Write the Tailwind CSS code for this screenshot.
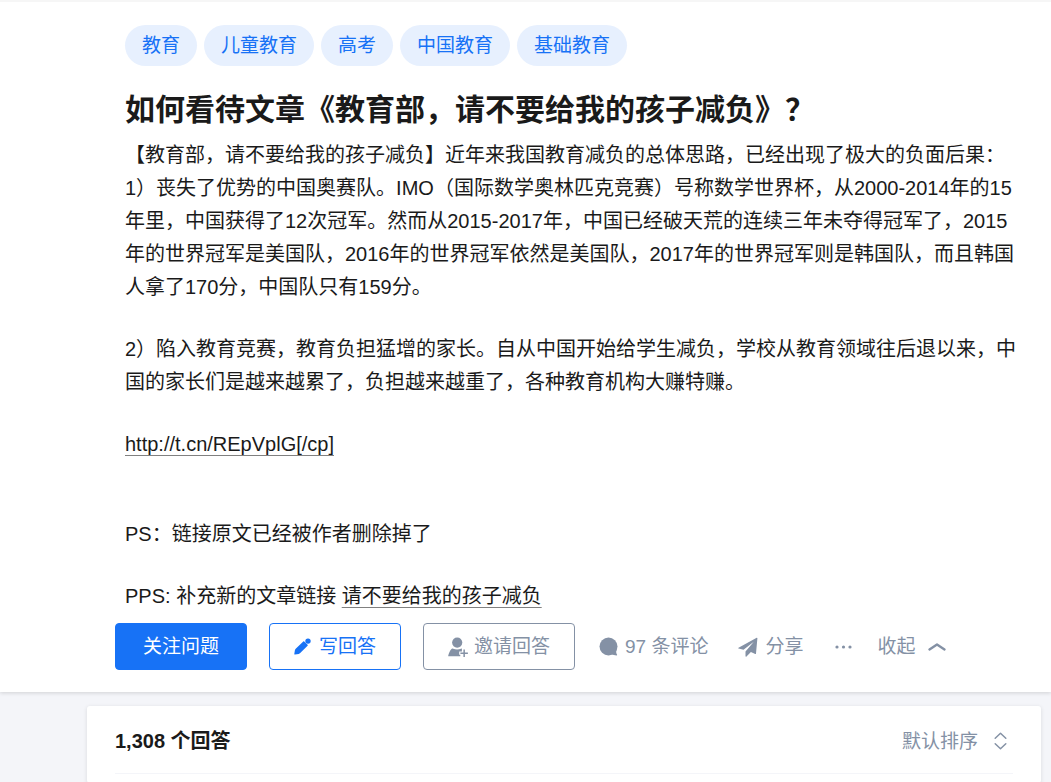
<!DOCTYPE html>
<html lang="zh-CN">
<head>
<meta charset="utf-8">
<title>如何看待文章《教育部，请不要给我的孩子减负》？</title>
<script src="https://cdn.jsdelivr.net/npm/@tailwindcss/browser@4"></script>
</head>
<body class="min-h-screen overflow-x-hidden bg-[#f4f5f9] font-['Liberation_Sans','Noto_Sans_CJK_SC',sans-serif] text-[#1a1a1a]">
<section class="border-t-2 border-[#f6f6f6] bg-white pt-[23px] pb-[22px] shadow-[0_1px_4px_rgba(26,26,26,0.16)]">
  <div class="pl-[125px]">
    <nav class="flex gap-[7px] text-[19px] leading-[41px] text-[#1772f6]" aria-label="话题">
      <a href="#" class="rounded-full bg-[#e7f0fe] px-[17px]">教育</a>
      <a href="#" class="rounded-full bg-[#e7f0fe] px-[17px]">儿童教育</a>
      <a href="#" class="rounded-full bg-[#e7f0fe] px-[17px]">高考</a>
      <a href="#" class="rounded-full bg-[#e7f0fe] px-[17px]">中国教育</a>
      <a href="#" class="rounded-full bg-[#e7f0fe] px-[17px]">基础教育</a>
    </nav>
    <h1 class="mt-[22px] text-[30px] leading-[44px] font-bold">如何看待文章《教育部，请不要给我的孩子减负》？</h1>
    <div class="mt-[7px] text-[20px] leading-[33px]">
      <p>【教育部，请不要给我的孩子减负】近年来我国教育减负的总体思路，已经出现了极大的负面后果：<br>1）丧失了优势的中国奥赛队。IMO（国际数学奥林匹克竞赛）号称数学世界杯，从2000-2014年的15<br>年里，中国获得了12次冠军。然而从2015-2017年，中国已经破天荒的连续三年未夺得冠军了，2015<br>年的世界冠军是美国队，2016年的世界冠军依然是美国队，2017年的世界冠军则是韩国队，而且韩国<br>人拿了170分，中国队只有159分。</p>
      <p class="mt-[29px]">2）陷入教育竞赛，教育负担猛增的家长。自从中国开始给学生减负，学校从教育领域往后退以来，中<br>国的家长们是越来越累了，负担越来越重了，各种教育机构大赚特赚。</p>
      <p class="mt-[29px]"><a href="#" class="underline decoration-[#808080] decoration-1 underline-offset-4">http://t.cn/REpVplG[/cp]</a></p>
      <p class="mt-[57px]">PS：链接原文已经被作者删除掉了</p>
      <p class="mt-[29px]">PPS: 补充新的文章链接 <a href="#" class="underline decoration-[#808080] decoration-1 underline-offset-4">请不要给我的孩子减负</a></p>
    </div>
  </div>
  <div class="mt-[10px] flex items-center pl-[115px] text-[19px] leading-[45px] whitespace-nowrap text-[#8491a5]">
    <button type="button" class="w-[132px] rounded-[4px] border border-[#1772f6] bg-[#1772f6] text-white">关注问题</button>
    <button type="button" class="ml-[22px] flex w-[132px] items-center justify-center gap-2 rounded-[4px] border border-[#1772f6] text-[#1772f6]">
      <svg class="size-[17px]" viewBox="0 0 17 17" fill="currentColor" aria-hidden="true"><path d="M.3 15.900.9 12.200c.1-.6.400-1.100.8-1.500L9.300 3.400c.3-.3.600-.3.900 0l3.400 3.400c.3.300.3.600 0 .9l-7.400 7.400c-.4.400-.9.700-1.500.8l-3.700.6c-.4.100-.8-.2-.7-.6z"/><circle cx="14" cy="3.100" r="2.700"/></svg>写回答</button>
    <button type="button" class="ml-[22px] flex w-[152px] items-center justify-center gap-[6px] rounded-[4px] border border-[#8491a5]">
      <svg class="size-[20px]" viewBox="0 0 20 20" fill="currentColor" aria-hidden="true"><circle cx="9.200" cy="5.600" r="5.100"/><path d="M.6 19.300c-.3 0-.5-.3-.4-.6.500-2.500 1.700-5 3-6.500.6-.7 1.300-.8 2-.5 2.400 1 5.400 1 7.800 0 .5-.2.800-.100.900.3v2.500h-2.700v3.200h1.100v1.600z"/><path d="M15.400 12.500h1.500v3h3V17h-3v3h-1.500v-3h-3v-1.500h3z"/></svg>邀请回答</button>
    <button type="button" class="ml-[24px] flex items-center gap-[7px]">
      <svg class="size-[19px]" viewBox="0 0 19 19" fill="currentColor" aria-hidden="true"><circle cx="9.500" cy="9.500" r="9"/><path d="M17.600 13c-.7 1.500-.4 3 .4 4.500.3.500 0 1-.5.900-1.900-.1-3.500-.4-4.700-1.100z"/></svg>97 条评论</button>
    <button type="button" class="ml-[30px] flex items-center gap-[7px]">
      <svg class="size-[20px]" viewBox="0 0 20 20" fill="currentColor" aria-hidden="true"><path d="M.5 10.700 18.700.700c.4-.2.800.1.700.5L18 16.500c0 .5-.4.700-.8.500l-4.300-1.900-4.400 4.400c-.4.400-1 .2-1-.3v-4.600L15.800 4.800 5.500 12.800.600 11.500c-.4-.1-.5-.6-.1-.8z"/></svg>分享</button>
    <button type="button" class="ml-[32px]" aria-label="更多"><svg class="h-[4px] w-[17px]" viewBox="0 0 17 4" fill="currentColor" aria-hidden="true"><circle cx="2" cy="2" r="1.600"/><circle cx="8.500" cy="2" r="1.600"/><circle cx="15" cy="2" r="1.600"/></svg></button>
    <button type="button" class="ml-[25px] flex items-center gap-[13px]">收起<svg class="h-[8px] w-[18px]" viewBox="0 0 18 8" fill="none" stroke="currentColor" stroke-width="2.400" stroke-linecap="round" stroke-linejoin="round" aria-hidden="true"><path d="M1.500 6.400 9 1.500l7.500 4.900"/></svg></button>
  </div>
</section>
<main class="mt-[14px] mr-[10px] ml-[87px] rounded-[3px] bg-white px-[28px] pb-[9px] shadow-[0_1px_4px_rgba(26,26,26,0.12)]">
  <header class="flex h-[68px] items-center justify-between border-b border-[#f4f5f9] pt-[3px]">
    <h2 class="text-[20px] leading-[33px] font-bold">1,308 个回答</h2>
    <button type="button" class="mr-[6px] flex items-center gap-4 text-[19px] leading-[33px] text-[#8491a5]">默认排序<svg class="h-[18px] w-[13px]" viewBox="0 0 13 18" fill="none" stroke="currentColor" stroke-width="1.500" stroke-linecap="round" stroke-linejoin="round" aria-hidden="true"><path d="m1.200 6.200 5.300-5 5.300 5M1.200 11.800l5.300 5 5.300-5"/></svg></button>
  </header>
</main>
</body>
</html>
